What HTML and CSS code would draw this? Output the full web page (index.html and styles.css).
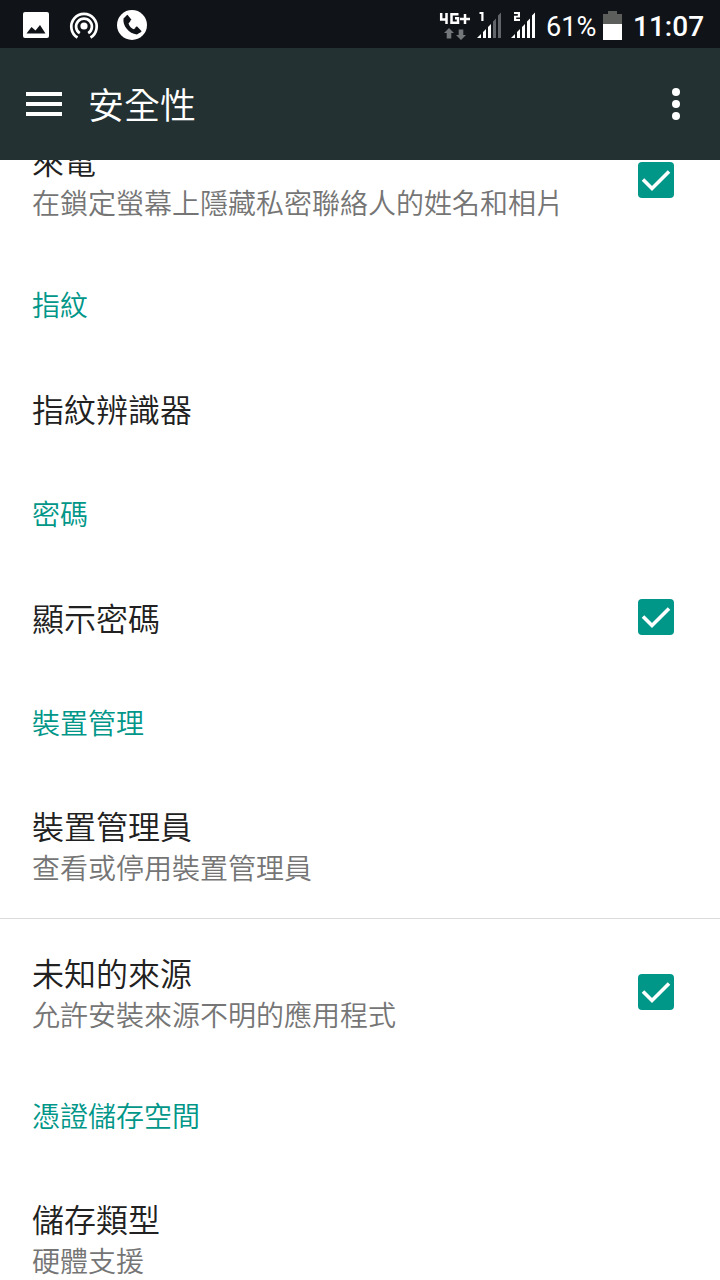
FILE: index.html
```html
<!DOCTYPE html>
<html lang="zh-Hant">
<head>
<meta charset="utf-8">
<title>安全性</title>
<link rel="stylesheet" href="styles.css">
</head>
<body>
<div class="screen">
  <header class="status">
    <svg class="notifications" viewBox="0 0 150 48" fill="#fff">
      <path fill-rule="evenodd" d="M25 12h22a2 2 0 0 1 2 2v22a2 2 0 0 1-2 2H25a2 2 0 0 1-2-2V14a2 2 0 0 1 2-2zM26.500 33.500h19L40 25l-4.500 5.500-4-3.500z"/>
      <g fill="none" stroke="#fff" stroke-width="2.700">
        <path d="M77.500 37.500A12.700 12.700 0 1 1 90.500 37.500"/>
        <path d="M79.800 33.200A7.900 7.900 0 1 1 88.200 33.200"/>
      </g>
      <circle cx="84" cy="26" r="3.600"/>
      <circle cx="132" cy="25" r="15"/>
      <path fill="#101318" d="M126 16.200l-2.400 2c-1.500 7.500 5.500 15.300 13.300 16.300l3.600-2.300-4-4.800-3 1.800c-2.300-1-4.300-3.500-5-5.800l2-2.300z"/>
      <path d="M126.500 15.500l4 5M136 27l4.800 5" stroke="#101318" stroke-width="2.500"/>
    </svg>
    <div class="indicators">
      <svg class="network" viewBox="0 0 102 48">
        <g fill="none" stroke="#fff" stroke-width="2.500">
          <path d="M5.200 13v6.500h6.500M10.500 13v11M22.500 14.200H15.500v8.600h6.500v-4.500h-3M24 19h10M29 14v10"/>
        </g>
        <path fill="#74777a" d="M13 28l5 5h-2.700v5.500h-4.600V33H8zM25 40l-5-5h2.700v-5.500h4.600V35H30z"/>
        <g fill="#fff">
          <path d="M43.500 12h4v9h-2.200v-7h-1.800zM41 38l4-4v4zM47 38v-6l3-3v9zM52 38V27l3-3v14z"/>
          <path fill="#62666a" d="M57 38V21.500l3-3V38zM62 38V15.500l3-3V38z"/>
          <path d="M78 12h6v5.500h-3.800V19H84v2h-6v-5.200h3.800V14H78zM75 38l4-4v4zM81 38v-6l3-3v9zM86 38V27l3-3v14zM91 38V21.500l3-3V38zM96 38V15.500l3-3V38z"/>
        </g>
      </svg>
      <span class="percent">61%</span>
      <svg class="battery" viewBox="0 0 20 30"><path fill="#5b5e5b" d="M0 3h5V0h9v3h5v10H0z"/><path fill="#fff" d="M0 13h19v16H0z"/></svg>
      <span class="clock">11:07</span>
    </div>
  </header>
  <nav class="toolbar">
    <svg class="menu" viewBox="0 0 36 24" fill="#fff"><path d="M0 0h36v4H0zM0 10h36v4H0zM0 20h36v4H0z"/></svg>
    <h1 class="heading">安全性</h1>
    <svg class="more" viewBox="0 0 8 32" fill="#fff"><circle cx="4" cy="4" r="4"/><circle cx="4" cy="16" r="4"/><circle cx="4" cy="28" r="4"/></svg>
  </nav>
  <main class="viewport">
    <div class="list">
      <section class="row">
        <div class="copy"><div class="title">來電</div><div class="summary">在鎖定螢幕上隱藏私密聯絡人的姓名和相片</div></div>
        <svg class="check" viewBox="0 0 36 36"><rect width="36" height="36" rx="4" fill="#009688"/><path d="M5 17.500l9 9L31 9.500" fill="none" stroke="#fff" stroke-width="3.600"/></svg>
      </section>
      <h2 class="category">指紋</h2>
      <section class="row single"><div class="title">指紋辨識器</div></section>
      <h2 class="category">密碼</h2>
      <section class="row single">
        <div class="title">顯示密碼</div>
        <svg class="check" viewBox="0 0 36 36"><rect width="36" height="36" rx="4" fill="#009688"/><path d="M5 17.500l9 9L31 9.500" fill="none" stroke="#fff" stroke-width="3.600"/></svg>
      </section>
      <h2 class="category">裝置管理</h2>
      <section class="row">
        <div class="copy"><div class="title">裝置管理員</div><div class="summary">查看或停用裝置管理員</div></div>
      </section>
      <section class="row divided">
        <div class="copy"><div class="title">未知的來源</div><div class="summary">允許安裝來源不明的應用程式</div></div>
        <svg class="check" viewBox="0 0 36 36"><rect width="36" height="36" rx="4" fill="#009688"/><path d="M5 17.500l9 9L31 9.500" fill="none" stroke="#fff" stroke-width="3.600"/></svg>
      </section>
      <h2 class="category">憑證儲存空間</h2>
      <section class="row">
        <div class="copy"><div class="title">儲存類型</div><div class="summary">硬體支援</div></div>
      </section>
    </div>
  </main>
</div>
</body>
</html>
```

FILE: styles.css
```css
* { box-sizing: border-box; }
body { margin: 0; background: #fff; font-family: "Noto Sans CJK TC DemiLight", "Noto Sans CJK TC", sans-serif; font-weight: 350; }
svg { display: block; flex: none; }
.screen { display: flex; flex-direction: column; width: 720px; height: 1280px; overflow: hidden; }
.status { display: flex; justify-content: space-between; flex: none; height: 48px; background: #101318; }
.notifications { width: 150px; height: 48px; }
.indicators { display: flex; align-items: center; padding-right: 16px; color: #fff; font-family: Roboto, sans-serif; line-height: 48px; white-space: nowrap; }
.network { width: 102px; height: 48px; margin-left: -1px; margin-right: 8px; }
.percent { width: 57px; padding-top: 5px; font-size: 27.2px; font-weight: 400; }
.battery { width: 20px; height: 30px; margin-top: 3px; margin-right: 10px; }
.clock { width: 71px; padding-top: 5px; font-size: 28px; font-weight: 500; }
.toolbar { display: flex; align-items: center; flex: none; height: 112px; padding: 0 40px 0 26px; background: #233132; }
.menu { width: 36px; height: 24px; }
.heading { flex: 1; margin: 0 0 2px 26px; color: #fff; font-size: 36px; font-weight: 350; line-height: 48px; }
.more { width: 8px; height: 32px; }
.viewport { flex: 1; min-height: 0; overflow: hidden; }
.list { margin-top: -53px; }
.row { display: flex; align-items: center; justify-content: space-between; height: 146px; padding: 0 46px 0 32px; }
.single { height: 108px; }
.divided { border-top: 1px solid #dcdcdc; }
.title { color: #212121; font-size: 32px; line-height: 42px; }
.summary { padding-top: 2px; color: #757575; font-size: 28px; line-height: 38px; }
.category { display: flex; align-items: center; height: 101px; margin: 0; padding: 0 32px; color: #009688; font-size: 28px; font-weight: 350; line-height: 38px; }
.check { width: 36px; height: 36px; }
```
